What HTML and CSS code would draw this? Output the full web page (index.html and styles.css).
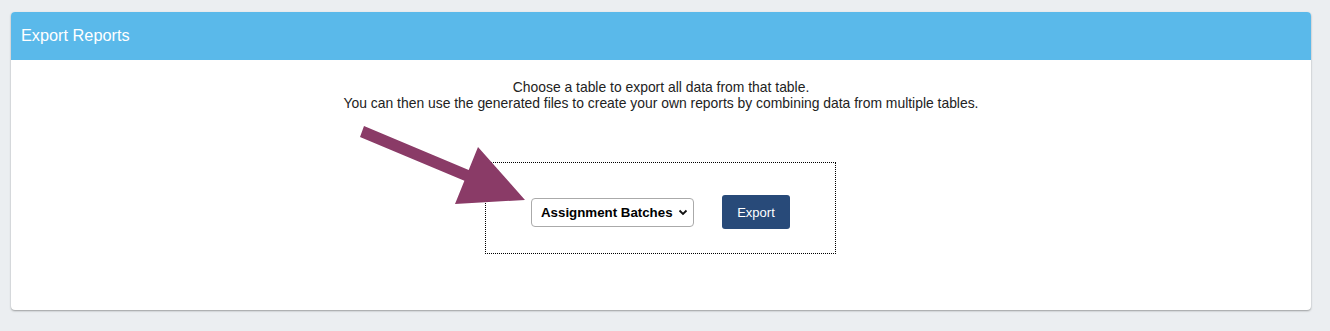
FILE: index.html
```html
<!DOCTYPE html>
<html lang="en">
<head>
  <meta charset="UTF-8">
  <meta name="viewport" content="width=device-width, initial-scale=1.0">
  <title>Export Reports</title>
  <link rel="stylesheet" href="styles.css">
</head>
<body>
  <div class="card">
    <div class="card-header">Export Reports</div>
    <div class="card-body">
      <p class="intro">
        Choose a table to export all data from that table.<br>
        You can then use the generated files to create your own reports by combining data from multiple tables.
      </p>
      <!-- arrow pointing at the table picker -->
      <svg class="arrow" width="175" height="90" viewBox="0 0 175 90">
        <polygon points="9,6 113.7,50 123,27 170,80 100,84 109.4,60.8 5,17" fill="#8a3b67" />
      </svg>
      <form class="export-box">
        <div class="select-wrap">
          <select id="table" name="table">
            <option>Assignment Batches</option>
            <option>Assignments</option>
            <option>Users</option>
          </select>
          <svg class="chevron" width="10" height="7" viewBox="0 0 10 7">
            <path d="M1.5 1.5 L5 5 L8.5 1.5" fill="none" stroke="#111" stroke-width="1.8" />
          </svg>
        </div>
        <button type="submit">Export</button>
      </form>
    </div>
  </div>
</body>
</html>
```

FILE: styles.css
```css
body {
  font-family: "Liberation Sans", Arial, sans-serif;
  background-color: #ebeef1;
  margin: 0;
  padding: 12px 19px 20px 11px;
}

.card {
  background: #ffffff;
  border-radius: 4px;
  box-shadow: 0 1px 2px rgba(0, 0, 0, 0.35);
  overflow: hidden;
}

.card-header {
  background-color: #5ab9ea;
  color: #ffffff;
  font-size: 16.3px;
  height: 48px;
  line-height: 46px;
  padding-left: 10px;
}

.card-body {
  position: relative;
  height: 250px;
  padding-top: 19px;
  box-sizing: border-box;
}

.intro {
  margin: 0;
  text-align: center;
  font-size: 13.9px;
  line-height: 16px;
  color: #222;
}

.arrow {
  position: absolute;
  left: 344px;
  top: 60px;
}

.export-box {
  width: 351px;
  height: 92px;
  box-sizing: border-box;
  margin: 51px 0 0 474px;
  border: 1px dotted #000;
  display: flex;
  align-items: center;
  justify-content: center;
  gap: 28px;
  padding-top: 8px;
}

.select-wrap {
  position: relative;
}

select {
  appearance: none;
  -webkit-appearance: none;
  width: 163px;
  height: 29px;
  padding: 0 0 0 9px;
  border: 1px solid #aaa;
  border-radius: 4px;
  background: #fff;
  font-family: inherit;
  font-weight: bold;
  font-size: 13.3px;
  color: #000;
}

.chevron {
  position: absolute;
  right: 6px;
  top: 11px;
  pointer-events: none;
}

button {
  width: 68px;
  height: 34px;
  background-color: #284a79;
  color: #ffffff;
  border: none;
  border-radius: 3px;
  font-family: inherit;
  font-size: 13px;
  cursor: pointer;
}

button:hover {
  background-color: #1d3a62;
}
```
